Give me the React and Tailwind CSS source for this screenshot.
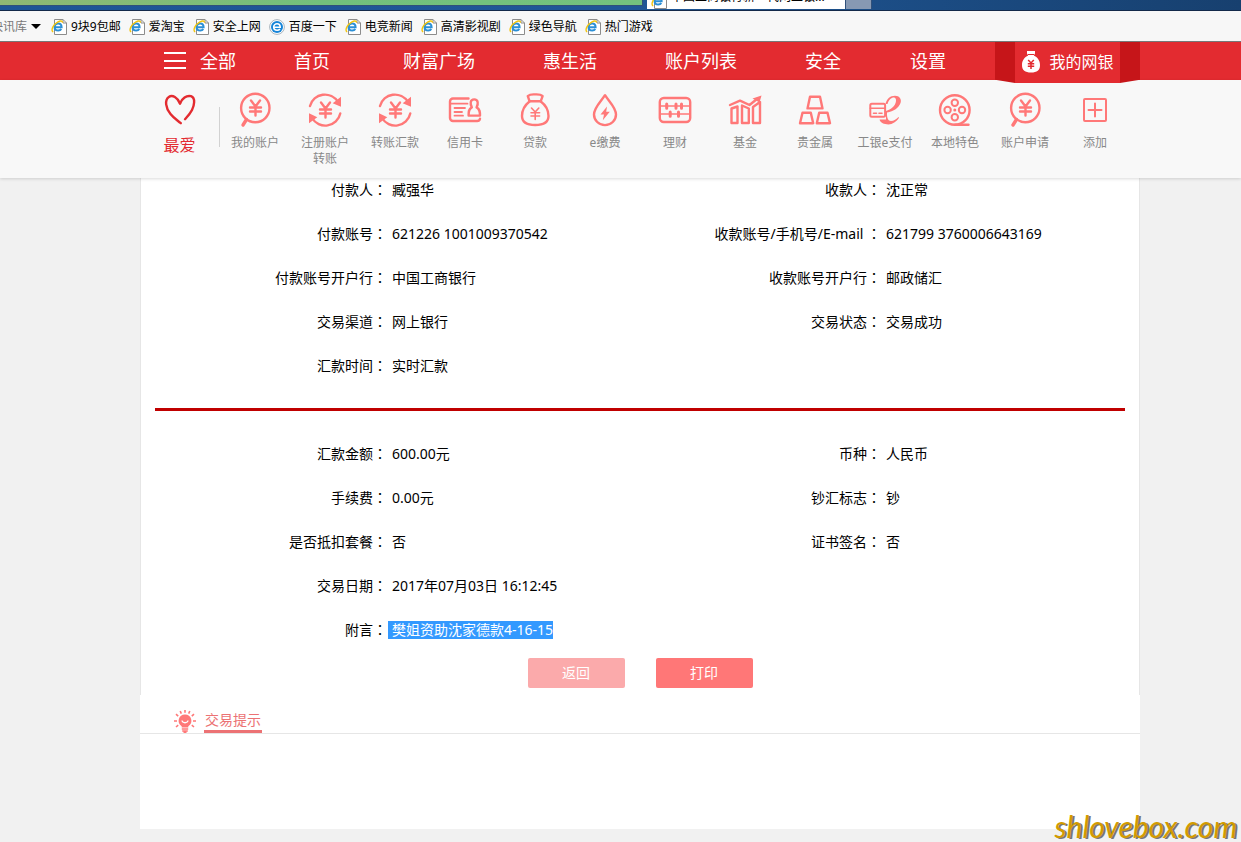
import React from "react";

const bookmarks = [
  { label: "9块9包邮" },
  { label: "爱淘宝" },
  { label: "安全上网" },
  { label: "百度一下", round: true },
  { label: "电竞新闻" },
  { label: "高清影视剧" },
  { label: "绿色导航" },
  { label: "热门游戏" },
];

const navItems = ["首页", "财富广场", "惠生活", "账户列表", "安全", "设置"];

const transferRows = [
  ["付款人", "臧强华", "收款人", "沈正常"],
  ["付款账号", "621226 1001009370542", "收款账号/手机号/E-mail ", "621799 3760006643169"],
  ["付款账号开户行", "中国工商银行", "收款账号开户行", "邮政储汇"],
  ["交易渠道", "网上银行", "交易状态", "交易成功"],
  ["汇款时间", "实时汇款"],
];

const amountRows = [
  ["汇款金额", "600.00元", "币种", "人民币"],
  ["手续费", "0.00元", "钞汇标志", "钞"],
  ["是否抵扣套餐", "否", "证书签名", "否"],
  ["交易日期", "2017年07月03日 16:12:45"],
  ["附言", "樊姐资助沈家德款4-16-15"],
];

const Icon = ({ children }) => (
  <svg
    viewBox="0 0 40 40"
    className="w-10 h-10"
    fill="none"
    stroke="#ff7878"
    strokeWidth="2.4"
    strokeLinecap="round"
    strokeLinejoin="round"
    aria-hidden="true"
  >
    {children}
  </svg>
);

const SearchYuan = () => (
  <Icon>
    <circle cx="20.3" cy="18" r="14.2" />
    <path d="M11.5 29.5 8 35" strokeWidth="3.4" />
    <path d="M16 10.5 20.5 16.5 25 10.5M20.5 16.5V25.5M15 17.5H26M15 21.5H26" />
  </Icon>
);

const TransferYuan = () => (
  <Icon>
    <path d="M5 16A15.4 15.4 0 0 1 33 12M35.3 23.5A15.4 15.4 0 0 1 7 28" />
    <path d="M36 6.7V16.7L27.7 13.3ZM4 23.3V33.3L12.3 27.3Z" fill="#ff7878" stroke="none" />
    <path d="M16 12.5 20.5 18.5 25 12.5M20.5 18.5V27.5M15 19.5H26M15 23.5H26" />
  </Icon>
);

const CreditCard = () => (
  <Icon>
    <path d="M23.5 8.5H8A3 3 0 0 0 5 11.5V28A3 3 0 0 0 8 31H32A3 3 0 0 0 35 28.7" />
    <path d="M5 13.7H22.5M9.5 18H20M9.5 22H17M9.5 25.7H18" strokeWidth="1.8" />
    <path d="M29.2 9.4C25 9.4 25 14 26.8 17.4 23.5 19 23.6 22 23.6 25.6H35C35 22 35 19 31.6 17.4 33.4 14 33.4 9.4 29.2 9.4Z" />
  </Icon>
);

const MoneyBag = () => (
  <Icon>
    <path d="M14.5 11.2 12.8 6.2C15 4 17.5 4.4 20 4.4S25.5 4 27.6 6.2L25.8 11.2Z" />
    <path d="M14.5 11.5C10 15 7 20.5 7 26 7 32.5 12 35 20.2 35S33.5 32.5 33.5 26C33.5 20.5 30.5 15 25.8 11.5" />
    <path d="M16.5 18 20.2 22 23.8 18M20.2 22V29.5M16 22.7H24.6M16 26H24.6" strokeWidth="1.6" />
  </Icon>
);

const Droplet = () => (
  <Icon>
    <path d="M20 5.2C16 11.5 9 17.5 9 24.5A11 10.6 0 0 0 31 24.5C31 17.5 24 11.5 20 5.2Z" />
    <path d="M22 16.5 15.5 24.5H19L17.8 30.3 24.8 21.8H21.2Z" fill="#ff7878" stroke="none" />
  </Icon>
);

const Abacus = () => (
  <Icon>
    <rect x="4.8" y="8" width="30.4" height="24" rx="4" />
    <path d="M5 16H35M5 24H35" strokeWidth="1.7" />
    <path d="M11.7 14V18.2M21 14V18.2M26.5 14V18.2M15.2 22V26.2M23.5 22V26.2" strokeWidth="3" />
  </Icon>
);

const FundChart = () => (
  <Icon>
    <path d="M6.5 18.5 12.5 16.5V33H6.5ZM17 15.5 23.8 18.5V33H17ZM28 17 35 12V33H28Z" />
    <path d="M5 15 15 10.7 24.5 15 32 9" />
    <path d="M27.5 8.5 36.5 5.5 34.5 12.5Z" fill="#ff7878" stroke="none" />
  </Icon>
);

const GoldBars = () => (
  <Icon>
    <path d="M15 6.7H25L27.5 18.4H12.5ZM7.5 22.8H15.8L18.2 33.2H5ZM24.2 22.8H32.5L35 33.2H21.8Z" />
  </Icon>
);

const EPay = () => (
  <Icon>
    <path
      d="M20.5 14C21.5 9 25 5.7 30 5.7 34.5 5.7 36.8 9 35.6 12.8 34 18 28.5 21.5 22 22.5 21.8 28 23 31 26 31 28.8 31 31.5 29.3 33.5 27L34 27.8C31.5 31.8 27.5 34.4 23.5 34.4 19 34.4 15.5 32.8 14.5 29.5H21V21C26 19.5 30.5 16 31 11 31.3 7.8 29.6 6.8 27.3 7.8 24.8 9 23.2 11.3 22.5 14Z"
      fill="#ff7878"
      stroke="none"
    />
    <rect x="5.3" y="13.8" width="14.8" height="13" rx="1.5" fill="#f8f8f8" strokeWidth="2" />
    <path d="M5.3 18.3H20M8.5 23.3H11.5M14 23.3H17" strokeWidth="1.6" />
  </Icon>
);

const FilmReel = () => (
  <Icon>
    <circle cx="19.8" cy="20" r="14.8" />
    <g strokeWidth="2">
      <circle cx="19.8" cy="12.7" r="3.2" />
      <circle cx="19.8" cy="27.2" r="3.2" />
      <circle cx="12.6" cy="20" r="3.2" />
      <circle cx="27" cy="20" r="3.2" />
    </g>
    <circle cx="19.8" cy="20" r="1.5" fill="#ff7878" stroke="none" />
    <path d="M20 34.8H33.5" />
  </Icon>
);

const AddBox = () => (
  <Icon>
    <rect x="9" y="9" width="22" height="22" rx="1" strokeWidth="2" />
    <path d="M20 13.5V26.5M13.5 20H26.5" strokeWidth="2" />
  </Icon>
);

const shortcuts = [
  { label: "我的账户", icon: SearchYuan },
  { label: "注册账户转账", icon: TransferYuan },
  { label: "转账汇款", icon: TransferYuan },
  { label: "信用卡", icon: CreditCard },
  { label: "贷款", icon: MoneyBag },
  { label: "e缴费", icon: Droplet },
  { label: "理财", icon: Abacus },
  { label: "基金", icon: FundChart },
  { label: "贵金属", icon: GoldBars },
  { label: "工银e支付", icon: EPay },
  { label: "本地特色", icon: FilmReel },
  { label: "账户申请", icon: SearchYuan },
  { label: "添加", icon: AddBox },
];

const BrowserIcon = ({ round }) => (
  <svg viewBox="0 0 16 16" className="w-4 h-4 shrink-0" fill="none" aria-hidden="true">
    {round ? (
      <>
        <circle cx="8" cy="8" r="7.4" fill="#fff" stroke="#a9b4bd" />
        <circle cx="8" cy="8" r="6" fill="#1684d8" />
        <path d="M4.8 8.3H11.2C11.2 6 9.8 4.8 8 4.8S4.7 6.2 4.7 8.1 6 11.3 8.1 11.3C9.3 11.3 10.3 10.9 10.9 10" stroke="#fff" strokeWidth="1.6" />
      </>
    ) : (
      <>
        <path d="M3.5.5H12L15.5 4V15.5H3.5Z" fill="#fff" stroke="#8c8c8c" />
        <path d="M12 .5V4H15.5" stroke="#8c8c8c" />
        <path d="M3.8 8.2H10.6C10.6 5.8 9.2 4.4 7.2 4.4S3.6 6 3.6 8.2 5 11.6 7.3 11.6C8.7 11.6 9.7 11 10.3 10" stroke="#2b8fd6" strokeWidth="2" />
        <path d="M2.2 12.8C-.6 11.6 2 5.5 7 2.8 9.5 1.5 11.6 1.8 11.4 3.6" stroke="#f2c40f" strokeWidth="1.4" />
      </>
    )}
  </svg>
);

const BrowserChrome = () => (
  <>
    <div className="h-[11px] flex overflow-hidden border-b border-[#13294a] bg-gradient-to-r from-[#1d5596] via-[#1f5797] to-[#17406f]">
      <div className="w-[643px] shrink-0 h-[6px] border-b border-r border-[#30507a] bg-gradient-to-r from-[#8fb873] via-[#72c07c] to-[#74c27e]" />
      <div className="w-[198px] shrink-0 ml-1 h-[9px] bg-white overflow-hidden flex items-end pl-1 gap-1">
        <BrowserIcon />
        <span className="pb-1 text-xs leading-4 whitespace-nowrap text-black">
          中国工商银行新一代网上银...
        </span>
      </div>
      <div className="w-[27px] shrink-0 h-[9px] bg-[#8799b3] border-x border-[#30507a]" />
    </div>
    <div className="h-[31px] pt-px flex items-center overflow-hidden whitespace-nowrap bg-[#f7f7f7] border-b border-[#777] text-xs text-black">
      <div className="w-[51px] shrink-0 flex items-center">
        <span className="w-[27px] flex justify-end overflow-hidden text-[#777]">快讯库</span>
        <span className="ml-1 border-x-[5px] border-t-[5px] border-x-transparent border-t-black" />
      </div>
      {bookmarks.map((item) => (
        <a key={item.label} href="#" className="flex items-center gap-1 mr-2">
          <BrowserIcon round={item.round} />
          {item.label}
        </a>
      ))}
    </div>
  </>
);

const Ribbon = () => (
  <a
    href="#"
    className="relative z-10 w-[145px] h-[41px] shrink-0 flex text-base text-white"
  >
    <span className="w-5 bg-[#c61519] [clip-path:polygon(0_0,100%_0,100%_100%,0_92%)]" />
    <span className="flex-1 pb-[2px] flex items-center justify-center gap-2 bg-[#e32b30]">
      <svg viewBox="0 0 20 22" className="w-5 h-[22px]" aria-hidden="true">
        <path d="M6 0H14V2.5L12.8 4.5C16.5 6 19 9.5 19 14 19 19.5 16 21.5 10 21.5S1 19.5 1 14C1 9.5 3.5 6 7.2 4.5L6 2.5Z" fill="#fff" />
        <path d="M7 3.5H13" stroke="#e32b30" />
        <path d="M7.2 9 10 12 12.8 9M10 12V18M6.8 12.7H13.2M6.8 15.2H13.2" fill="none" stroke="#e32b30" strokeWidth="1.5" />
      </svg>
      我的网银
    </span>
    <span className="w-5 bg-[#c61519] [clip-path:polygon(0_0,100%_0,100%_92%,0_100%)]" />
  </a>
);

const MainNav = () => (
  <nav className="h-[38px] pl-[140px] pr-[101px] flex justify-between bg-[#e32b30] text-lg text-white whitespace-nowrap">
    <div className="pb-px flex items-center">
      <button className="w-[154px] pl-6 flex items-center gap-[14px]">
        <span className="w-[22px] h-[17px] flex flex-col justify-between">
          <span className="h-[2px] bg-white" />
          <span className="h-[2px] bg-white" />
          <span className="h-[2px] bg-white" />
        </span>
        全部
      </button>
      <div className="grid grid-cols-[109px_140px_122px_140px_105px_36px]">
        {navItems.map((item) => (
          <a key={item} href="#">
            {item}
          </a>
        ))}
      </div>
    </div>
    <Ribbon />
  </nav>
);

const ShortcutBar = () => (
  <div className="relative h-[98px] pl-[140px] pr-[61px] flex bg-[#f8f8f8] shadow-[0_1px_3px_rgba(0,0,0,0.15)]">
    <a href="#" className="w-[79px] shrink-0 pt-[10px] flex flex-col items-center text-base leading-6 text-[#e32b30]">
      <svg viewBox="0 0 40 40" className="w-10 h-10 mb-[3px]" fill="none" stroke="#e32b30" strokeLinecap="round" aria-hidden="true">
        <path d="M20 13.5C17.5 7.5 12.5 4.5 8.8 7 4.5 10 5.5 18 10.5 24 13.5 27.8 17 30 20.8 33.2" strokeWidth="2.4" />
        <path d="M20 13.5C22 8.5 26.5 5 31 6.2 36 8 34 16 32 20 30 24 27.5 26.5 25 29.2" strokeWidth="2.4" />
      </svg>
      最爱
    </a>
    <div className="w-px h-10 mt-[27px] shrink-0 bg-[#d2d2d2]" />
    {shortcuts.map(({ label, icon: Glyph }) => (
      <a
        key={label}
        href="#"
        className="w-[70px] shrink-0 pt-[10px] flex flex-col items-center text-xs leading-4 text-center text-[#888]"
      >
        <Glyph />
        <span className="mt-[5px] max-w-14">{label}</span>
      </a>
    ))}
  </div>
);

// The Traditional face centres the full-width colon in its box
const Label = ({ children }) => (
  <dt className="pr-px text-right whitespace-pre">
    {children}
    <span className="font-['Noto_Sans','Noto_Sans_CJK_TC',sans-serif]">：</span>
  </dt>
);

const DetailRows = ({ rows }) => (
  <dl className="pr-[10px] grid gap-y-5 text-sm leading-6 text-black">
    {rows.map(([label, value, label2, value2]) => (
      <div key={label} className="h-6 grid grid-cols-4 whitespace-nowrap">
        <Label>{label}</Label>
        {label === "附言" ? (
          <dd>
            <mark className="inline-block h-[18px] pl-1 leading-[18px] bg-[#3399ff] text-white">
              {value}
            </mark>
          </dd>
        ) : (
          <dd className="pl-1">{value}</dd>
        )}
        {label2 && (
          <>
            <Label>{label2}</Label>
            <dd className="pl-1">{value2}</dd>
          </>
        )}
      </div>
    ))}
  </dl>
);

const Bulb = () => (
  <svg viewBox="0 0 22 23" className="w-[22px] h-[23px]" fill="none" stroke="#ff7878" aria-hidden="true">
    <path d="M11 4.5A6.3 6.3 0 0 1 14.3 16.2V17.5H7.7V16.2A6.3 6.3 0 0 1 11 4.5Z" fill="#ff7878" stroke="none" />
    <path d="M8 10.5C8.5 13.5 13.5 13.5 14 10.5" stroke="#fff" strokeWidth="1.3" />
    <path d="M7.8 19H14.2M8.2 21H13.8M9.5 22.5H12.5" strokeWidth="1.3" />
    <path d="M11 0V2.8M6.2 1 7.3 3.6M15.8 1 14.7 3.6M2 4.2 4.2 6.2M20 4.2 17.8 6.2M0 11H3M22 11H19M2 17 4.2 15.2M20 17 17.8 15.2" strokeWidth="1.6" />
  </svg>
);

const App = () => {
  return (
    <div className="relative min-h-screen bg-[#f1f1f1] font-['Noto_Sans','Noto_Sans_CJK_SC',sans-serif]">
      <BrowserChrome />
      <MainNav />
      <ShortcutBar />

      <main className="ml-[140px] mr-[101px]">
        <section className="border-x border-[#e6e6e6] bg-white pb-[7px]">
          <DetailRows rows={transferRows} />
          <hr className="mx-[14px] mt-[30px] mb-[31px] border-0 h-[3px] bg-[#c00000]" />
          <DetailRows rows={amountRows} />
          <div className="mt-4 flex justify-center gap-[31px] text-sm text-white">
            <button className="w-[97px] h-[30px] rounded-xs bg-[#fbaaab]">返回</button>
            <button className="w-[97px] h-[30px] rounded-xs bg-[#ff7777]">打印</button>
          </div>
        </section>

        {/* Transaction tips */}
        <section className="bg-white pt-[15px] pb-[95px]">
          <div className="pl-[34px] flex items-end gap-2 border-b border-[#e6e6e6]">
            <Bulb />
            <h2 className="px-px border-b-[3px] border-[#ec7274] text-sm leading-5 text-[#ec7274]">
              交易提示
            </h2>
          </div>
        </section>
      </main>

      <div className="absolute right-1 bottom-0 font-['Lato',sans-serif] italic text-3xl leading-8 text-[#d29b00] [text-shadow:2px_1px_0_#777]">
        shlovebox.com
      </div>
    </div>
  );
};

export default App;
